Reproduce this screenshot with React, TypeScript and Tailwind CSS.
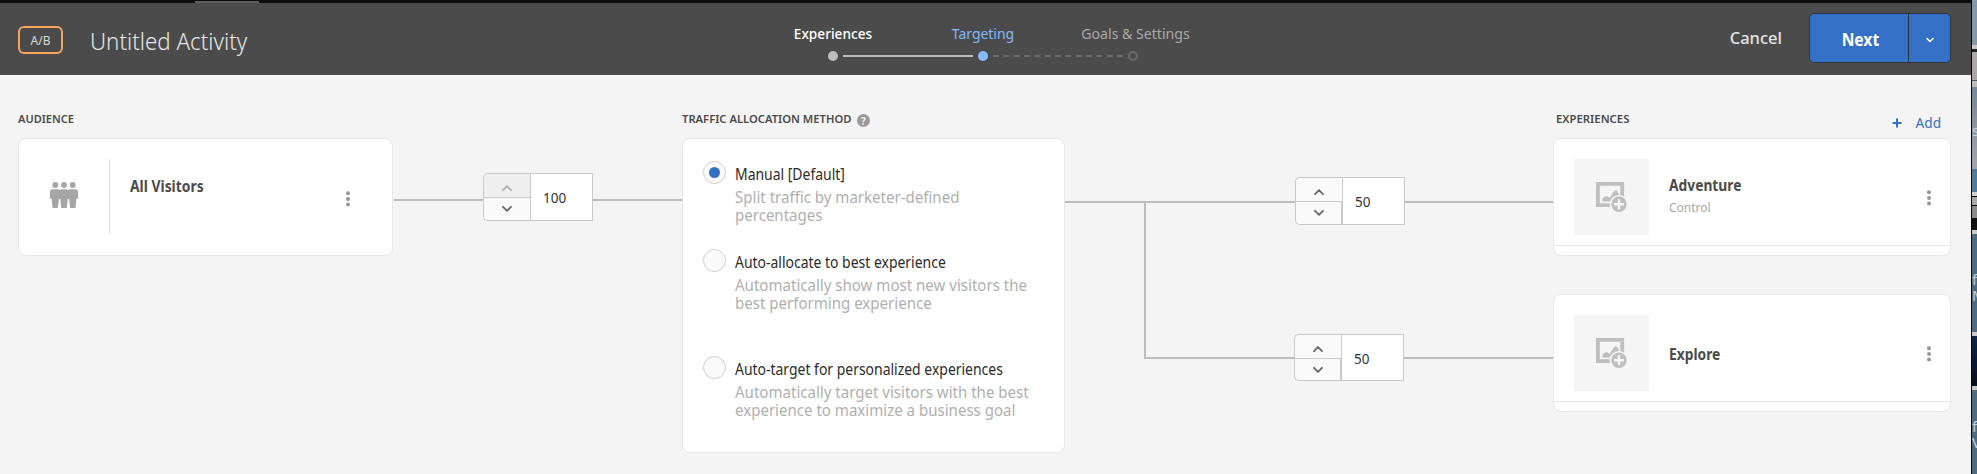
import type { ReactNode } from "react";
import clsx from "clsx";

function Chevron({ up = false, className }: { up?: boolean; className?: string }) {
  return (
    <svg viewBox="0 0 12 8" className={clsx("h-2 w-3", className)} fill="none" stroke="currentColor" strokeWidth="2" strokeLinecap="round" strokeLinejoin="round">
      <path d={up ? "M2 6.1 6 2.1l4 4" : "M2 1.9l4 4 4-4"} />
    </svg>
  );
}

function MoreDots() {
  return (
    <svg viewBox="0 0 4 16" className="h-4 w-1 shrink-0 fill-[#979797]">
      <circle cx="2" cy="2.2" r="2" />
      <circle cx="2" cy="7.9" r="2" />
      <circle cx="2" cy="13.6" r="2" />
    </svg>
  );
}

function SectionLabel({ children, className }: { children: ReactNode; className?: string }) {
  return (
    <span className={clsx("origin-left text-[11.5px] leading-4 font-semibold whitespace-nowrap text-[#4b4b4b]", className)}>
      {children}
    </span>
  );
}

function Stepper({ value, upDisabled = false, thick = false, className }: { value: string; upDisabled?: boolean; thick?: boolean; className?: string }) {
  return (
    <div className={clsx("flex w-[110px] shrink-0", className)}>
      <div className="flex w-[47px] flex-col overflow-hidden rounded-l-[5px] border border-r-0 border-[#cacaca] bg-[#fafafa]">
        <button
          className={clsx(
            "flex h-6 items-center justify-center border-b border-[#cacaca] pt-1",
            upDisabled ? "bg-[#efefef] text-[#b3b3b3]" : "text-[#6e6e6e]",
          )}
        >
          <Chevron up />
        </button>
        <button className={clsx("flex flex-1 items-center justify-center border-[#cacaca] text-[#6e6e6e]", thick && "border-r")}>
          <Chevron />
        </button>
      </div>
      <div className="flex w-[63px] items-center border border-[#cacaca] bg-white pl-[12px] text-[15px] leading-5 text-[#323232]">
        <span className="origin-left scale-x-[0.9]">{value}</span>
      </div>
    </div>
  );
}

function Line({ className }: { className?: string }) {
  return <div className={clsx("h-0.5 shrink-0 bg-[#bdbdbd]", className)} />;
}

function Header() {
  return (
    <header className="flex h-[72px] shrink-0 bg-[#4b4b4b]">
      <div className="flex w-[778px] pl-[18px]">
        <div className="mt-[23px] flex h-7 w-[45px] items-center justify-center rounded-[6px] border-2 border-[#f9a45c] pt-0.5 text-xs leading-4 text-[#d8d8d8]">
          A/B
        </div>
        <h1 className="mt-[22px] ml-[27px] origin-left scale-x-[0.93] text-[24px] leading-8 font-light text-[#e6e6e6]">
          Untitled Activity
        </h1>
      </div>
      <nav className="flex w-[410px] flex-col pt-[20px]">
        <div className="flex text-[15px] leading-5 whitespace-nowrap">
          <span className="w-[110px] scale-x-[0.91] text-center font-medium text-white">Experiences</span>
          <span className="w-[190px] scale-x-[0.93] text-center text-[#82b8fb]">Targeting</span>
          <span className="w-[110px] scale-x-[0.94] text-center text-[#a9a9a9]">Goals &amp; Settings</span>
        </div>
        <svg viewBox="0 0 310 12" className="mt-[7px] ml-[50px] h-3 w-[310px] shrink-0">
          <circle cx="5" cy="6" r="5" fill="#bdbdbd" />
          <path d="M15 6h130" stroke="#bdbdbd" strokeWidth="2" />
          <circle cx="155" cy="6" r="5" fill="#86bbff" />
          <path d="M165 6h130" stroke="#6a6a6a" strokeWidth="2" strokeDasharray="6 4.333" />
          <circle cx="305" cy="6" r="4" fill="none" stroke="#6a6a6a" strokeWidth="2" />
        </svg>
      </nav>
      <div className="flex flex-1 justify-end pr-5">
        <button className="mt-[23px] mr-[27px] h-6 text-[16.5px] leading-6 font-medium text-[#e4e4e4]">Cancel</button>
        <div className="mt-2.5 flex h-[50px] w-[142px] overflow-hidden rounded-[5px] border border-[#2a3440] bg-[#3570c7] text-white">
          <button className="w-[99px] border-r border-[#2a3440] pt-[3px] pl-0.5 text-[17px] font-bold">
            <span className="inline-block scale-x-[0.92]">Next</span>
          </button>
          <button className="flex flex-1 items-center justify-center pt-1">
            <Chevron className="h-[6px] w-[10px]" />
          </button>
        </div>
      </div>
    </header>
  );
}

function PeopleIcon() {
  return (
    <svg viewBox="0 0 28 26" className="mt-[43px] ml-[31px] h-[26px] w-7 shrink-0 fill-[#a6a6a6]">
      <circle cx="5.3" cy="3" r="2.9" />
      <circle cx="14" cy="3" r="2.9" />
      <circle cx="22.7" cy="3" r="2.9" />
      <path d="M3 7.2h4.6q1.2 0 2 .7.8-.7 2-.7h4.8q1.2 0 2 .7.8-.7 2-.7H25q3 0 3 3v5.6q0 1.200-1.600 1.200L25.500 26h-5.400l-1-9h-1.300l-1 9h-5.500l-1-9H8.900l-1 9H2.600l-1-9Q0 17 0 15.800v-5.600q0-3 3-3z" />
    </svg>
  );
}

function AudienceCard() {
  return (
    <div className="flex h-[118px] w-[375px] rounded-[8px] border border-[#e8e8e8] bg-white">
      <PeopleIcon />
      <div className="mt-5 ml-[31px] h-[75px] w-px bg-[#e1e1e1]" />
      <div className="mt-[37px] ml-[20px] flex-1 text-[15.5px] leading-5 font-bold text-[#4b4b4b]">
        <span className="inline-block origin-left scale-x-[0.895]">All Visitors</span>
      </div>
      <div className="mt-[52px] mr-[42px]">
        <MoreDots />
      </div>
    </div>
  );
}

function MethodOption({ label, lines, checked = false, className }: { label: string; lines: string[]; checked?: boolean; className?: string }) {
  return (
    <div className={clsx("flex", className)}>
      <span className="-mt-[3px] flex h-[23px] w-[23px] shrink-0 items-center justify-center rounded-full border border-[#cfcfcf] bg-[#fafafa]">
        {checked && <span className="h-[11px] w-[11px] rounded-full bg-[#3570c7]" />}
      </span>
      <div className="ml-[9px] whitespace-nowrap">
        <div className="origin-left scale-x-[0.9] text-[15.5px] leading-5 text-[#2c2c2c]">{label}</div>
        <div className="mt-[4px] origin-left scale-x-[0.912] text-[16.5px] leading-[18px] text-[#b0b0b0]">
          {lines.map((line) => (
            <div key={line}>{line}</div>
          ))}
        </div>
      </div>
    </div>
  );
}

function AddImageIcon() {
  return (
    <svg viewBox="0 0 31 30" className="h-[30px] w-[31px]">
      <path d="M1.900 1.900h24.300v21.200H1.900z" fill="none" stroke="#bfbfbf" strokeWidth="3.800" />
      <path d="M6.500 19.500v-3q2.600-3 4.600-2.200 1.400.6 2.600 1.700L18.200 9q1.500-1.700 3 0l2 4v6.500z" fill="#bfbfbf" />
      <circle cx="23" cy="22.200" r="9.300" fill="#f5f5f5" />
      <circle cx="23" cy="22.200" r="7.700" fill="#bfbfbf" />
      <path d="M18 22.200h10M23 17.200v10" stroke="#f5f5f5" strokeWidth="2.400" />
    </svg>
  );
}

function ExperienceCard({ name, note }: { name: string; note?: string }) {
  return (
    <div className="flex h-[118px] w-[398px] flex-col rounded-[8px] border border-[#e8e8e8] bg-white">
      <div className="flex h-[107px] items-center border-b border-[#e8e8e8] pr-[19px] pl-5">
        <div className="mt-[9px] flex h-[76px] w-[75px] shrink-0 items-center justify-center self-center bg-[#f5f5f5]">
          <AddImageIcon />
        </div>
        <div className={clsx("ml-5 flex-1", note ? "pt-[5px]" : "pt-[11px]")}>
          <div className="origin-left scale-x-[0.89] text-[15.5px] leading-5 font-bold text-[#4b4b4b]">{name}</div>
          {note && <div className="mt-1 origin-left scale-x-[0.92] text-[13px] leading-4 text-[#a9a9a9]">{note}</div>}
        </div>
        <div className="mt-3">
          <MoreDots />
        </div>
      </div>
    </div>
  );
}

function DesktopEdge() {
  return (
    <div className="flex w-1.5 shrink-0 flex-col overflow-hidden border-l border-black text-[15px] leading-4 text-[#c9d3da]">
      <div className="h-[45px] bg-[#8098a8]" />
      <div className="h-1 bg-[#c9c9c9]" />
      <div className="h-[3px] bg-[#222222]" />
      <div className="h-[28px] bg-[#a9a7a8]" />
      <div className="h-[7px] border-t border-[#555555] bg-[#bdbdbd]" />
      <div className="h-[82px] bg-linear-to-b from-[#75899a] to-[#a3a6ac] pt-[35px]">s</div>
      <div className="h-[23px] bg-[#4d7d9b]" />
      <div className="h-[5px] border-b border-black bg-[#d0d0d0]" />
      <div className="h-[9px] border-b border-black bg-[#aaa8a8]" />
      <div className="h-3 bg-[#8b8b8b]" />
      <div className="h-3 bg-[#111111]" />
      <div className="h-1 bg-[#c9c9c9]" />
      <div className="h-[98px] bg-[#4b6b82] pt-[37px]">
        <div>f</div>
        <div>M</div>
      </div>
      <div className="h-1 bg-[#c9c9c9]" />
      <div className="h-[50px] bg-linear-to-b from-[#0b2548] to-[#05101f]" />
      <div className="h-1 bg-[#c9c9c9]" />
      <div className="flex-1 bg-[#4e6b80] pt-[28px]">
        <div>f</div>
        <div>V</div>
      </div>
    </div>
  );
}

export default function App() {
  return (
    <div className="flex h-[474px] w-[1977px] overflow-hidden bg-[#f4f4f4] font-['Noto_Sans',sans-serif]">
      <div className="flex w-[1971px] shrink-0 flex-col">
        <div className="flex h-[3px] shrink-0 items-end bg-[#0c0c0c] pl-[195px]">
          <div className="h-0.5 w-16 bg-[#5f5b5f]" />
        </div>
        <Header />
        <main className="flex flex-1 items-start pl-[18px]">
          <section className="flex flex-col">
            <div className="flex h-[63px] pt-[36px]">
              <SectionLabel className="scale-x-[0.96]">AUDIENCE</SectionLabel>
            </div>
            <AudienceCard />
          </section>

          <div className="mt-[98px] ml-px flex h-12 items-center">
            <Line className="mt-[6px] w-[89px]" />
            <Stepper value="100" upDisabled className="h-12" />
            <Line className="mt-[6px] w-[89px]" />
          </div>

          <section className="flex flex-col">
            <div className="flex h-[63px] items-start pt-[36px]">
              <SectionLabel className="scale-x-[0.975]">TRAFFIC ALLOCATION METHOD</SectionLabel>
              <span className="mt-[3px] ml-px flex h-[13px] w-[13px] items-center justify-center rounded-full bg-[#999999] text-[10px] leading-3 font-bold text-[#f4f4f4]">
                ?
              </span>
            </div>
            <div className="h-[315px] w-[383px] rounded-[8px] border border-[#e8e8e8] bg-white pt-[25px] pl-5">
              <MethodOption checked label="Manual [Default]" lines={["Split traffic by marketer-defined", "percentages"]} />
              <MethodOption
                className="mt-[28px]"
                label="Auto-allocate to best experience"
                lines={["Automatically show most new visitors the", "best performing experience"]}
              />
              <MethodOption
                className="mt-[47px]"
                label="Auto-target for personalized experiences"
                lines={["Automatically target visitors with the best", "experience to maximize a business goal"]}
              />
            </div>
          </section>

          <Line className="mt-[126px] w-[79px]" />
          <div className="mt-[126px] h-[158px] w-[151px] border-2 border-r-0 border-[#bdbdbd]" />
          <div className="flex w-[258px] flex-col pt-[102px]">
            <div className="flex items-center">
              <Stepper value="50" thick className="h-12" />
              <Line className="mt-0.5 w-[148px]" />
            </div>
            <div className="mt-[109px] -ml-px flex items-center">
              <Stepper value="50" thick className="h-[47px]" />
              <Line className="mt-px w-[149px]" />
            </div>
          </div>

          <section className="flex flex-col">
            <div className="flex h-[63px] items-start justify-between pt-[36px] pr-[10px] pl-[3px]">
              <SectionLabel className="scale-x-[0.985]">EXPERIENCES</SectionLabel>
              <button className="mt-px flex items-center text-[15px] leading-5 text-[#3570c7]">
                <svg viewBox="0 0 10 10" className="mt-px mr-[11px] h-2.5 w-2.5" stroke="currentColor" strokeWidth="2">
                  <path d="M5 .5v9M.5 5h9" />
                </svg>
                <span className="origin-right scale-x-[0.91]">Add</span>
              </button>
            </div>
            <ExperienceCard name="Adventure" note="Control" />
            <div className="mt-[38px]">
              <ExperienceCard name="Explore" />
            </div>
          </section>
        </main>
      </div>
      <DesktopEdge />
    </div>
  );
}
